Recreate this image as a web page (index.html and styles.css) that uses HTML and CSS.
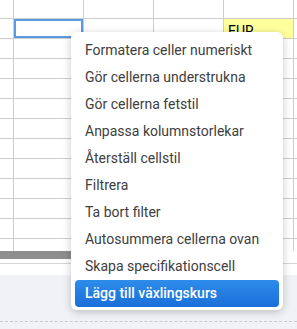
FILE: index.html
```html
<!DOCTYPE html>
<html lang="sv">
<head>
  <meta charset="UTF-8">
  <meta name="viewport" content="width=device-width, initial-scale=1.0">
  <title>Kalkylblad</title>
  <link rel="stylesheet" href="styles.css">
</head>
<body>
  <div class="page">
    <div class="sheet" id="sheet"></div>

    <div class="scrollbar">
      <div class="thumb"></div>
    </div>
    <div class="footer-line"></div>
    <div class="footer">
      <div class="dashed"></div>
    </div>

    <ul class="menu">
      <li>Formatera celler numeriskt</li>
      <li>Gör cellerna understrukna</li>
      <li>Gör cellerna fetstil</li>
      <li>Anpassa kolumnstorlekar</li>
      <li>Återställ cellstil</li>
      <li>Filtrera</li>
      <li>Ta bort filter</li>
      <li>Autosummera cellerna ovan</li>
      <li>Skapa specifikationscell</li>
      <li class="active">Lägg till växlingskurs</li>
    </ul>
  </div>

  <script>
    // build the grid rows
    const sheet = document.getElementById('sheet');
    const rows = 13;
    const cols = 6;

    for (let r = 0; r < rows; r++) {
      for (let c = 0; c < cols; c++) {
        const cell = document.createElement('div');
        cell.className = 'cell';
        if (r === 1 && c === 1) cell.classList.add('selected');
        if (r === 1 && c === 4) {
          cell.classList.add('currency');
          cell.textContent = 'EUR';
        }
        sheet.appendChild(cell);
      }
    }
  </script>
</body>
</html>
```

FILE: styles.css
```css
body {
  margin: 0;
  font-family: Roboto, 'Liberation Sans', sans-serif;
  background-color: white;
  overflow: hidden;
}

.page {
  position: relative;
  width: 297px;
  height: 329px;
  overflow: hidden;
}

.sheet {
  display: grid;
  grid-template-columns: 14px 70px 70px 70px 70px 70px;
  grid-template-rows: 19px repeat(12, 20px);
  height: 251px;
  overflow: hidden;
}

.cell {
  border-right: 1px solid #cdcdcd;
  border-bottom: 1px solid #cdcdcd;
  font-size: 14px;
  color: #000;
}

.cell.selected {
  box-shadow: inset 0 0 0 2px #5b9be0;
}

.cell.currency {
  background-color: #ffff9c;
  padding: 4px 0 0 4px;
  line-height: 16px;
}

.scrollbar {
  height: 8px;
  background-color: white;
}

.thumb {
  width: 220px;
  height: 8px;
  background-color: #8e8e8e;
}

.footer-line {
  height: 4px;
  border-bottom: 1px solid #d6d6d6;
  margin-bottom: 11px;
}

.footer {
  height: 54px;
  background-color: #f1f2f5;
  padding-top: 46px;
  box-sizing: border-box;
}

.dashed {
  border-top: 1px dashed #cbcbcf;
}

.menu {
  position: absolute;
  left: 71px;
  top: 32px;
  width: 212px;
  margin: 0;
  padding: 5px 4px 3px;
  box-sizing: border-box;
  list-style: none;
  background-color: white;
  border-radius: 6px;
  box-shadow: 0 2px 8px rgba(0, 0, 0, 0.22);
}

.menu li {
  height: 27px;
  line-height: 27px;
  padding-left: 10px;
  font-size: 14px;
  color: #404040;
  border-radius: 4px;
  white-space: nowrap;
}

.menu li.active {
  background: linear-gradient(#2e8ceb, #1a6fd8);
  color: white;
  font-weight: 500;
}
```
